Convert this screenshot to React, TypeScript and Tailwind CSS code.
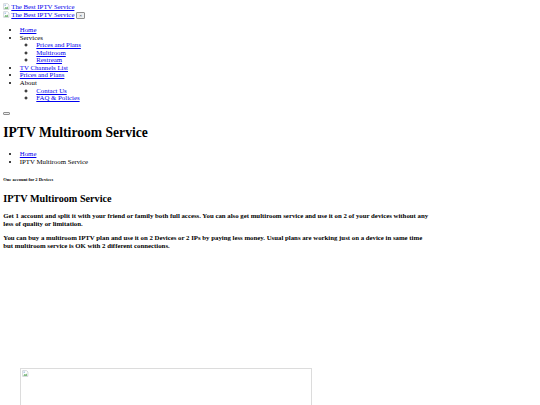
import React from "react";

function BrokenImg() {
  return (
    <svg width="7" height="7" viewBox="0 0 16 16" className="inline-block align-[-1px] mr-[1px]">
      <path d="M1.5 1.5h9l3 3v10h-12z" fill="#fff" stroke="#9aa3ad" strokeWidth="1" />
      <path d="M3 13l3-4 2 2 2-3 2 5z" fill="#5fa95f" />
      <circle cx="5" cy="5" r="1.3" fill="#6fa0d8" />
    </svg>
  );
}

function A({ children }: { children: React.ReactNode }) {
  return <a href="#" className="text-[#0000ee] underline">{children}</a>;
}

export default function App() {
  return (
    <div className="min-h-[405px] bg-white text-black font-['Liberation_Serif',serif] text-[6.8px] leading-[7.56px] p-[3.3px] overflow-hidden">
      <div>
        <a href="#" className="text-[#0000ee] underline"><BrokenImg />The Best IPTV Service</a>
      </div>
      <div className="flex items-center h-[8.6px]">
        <a href="#" className="text-[#0000ee] underline"><BrokenImg />The Best IPTV Service</a>
        <button className="ml-[1.7px] w-[9px] h-[7px] border border-[#8f8f8f] bg-[#efefef] rounded-[1px] text-[5px] leading-[5px] flex items-center justify-center">×</button>
      </div>
      <ul className="list-disc pl-[16.5px] my-[6.6px]">
        <li><A>Home</A></li>
        <li>Services
          <ul className="list-[circle] pl-[16.5px]">
            <li><A>Prices and Plans</A></li>
            <li><A>Multiroom</A></li>
            <li><A>Restream</A></li>
          </ul>
        </li>
        <li><A>TV Channels List</A></li>
        <li><A>Prices and Plans</A></li>
        <li>About
          <ul className="list-[circle] pl-[16.5px]">
            <li><A>Contact Us</A></li>
            <li><A>FAQ &amp; Policies</A></li>
          </ul>
        </li>
      </ul>
      <div className="h-[7.56px] flex items-end pb-[1px]">
        <button className="w-[6.6px] h-[2.6px] border border-[#8f8f8f] bg-[#efefef] rounded-[1px]"></button>
      </div>
      <h1 className="text-[13.6px] leading-[15.2px] font-bold mt-[8.8px] mb-[10.3px]">IPTV Multiroom Service</h1>
      <ul className="list-disc pl-[16.5px] my-[6.6px]">
        <li><A>Home</A></li>
        <li>IPTV Multiroom Service</li>
      </ul>
      <h6 className="text-[4.5px] leading-[5.1px] font-bold mt-[12px] mb-[10.3px]">One account for 2 Devices</h6>
      <h2 className="text-[10.2px] leading-[11.4px] font-bold mt-[8.2px] mb-[8.2px]">IPTV Multiroom Service</h2>
      <div className="max-w-[426px] font-bold">
        <p className="my-[7px]">Get 1 account and split it with your friend or family both full access. You can also get multiroom service and use it on 2 of your devices without any less of quality or limitation.</p>
        <p className="my-[7px]">You can buy a multiroom IPTV plan and use it on 2 Devices or 2 IPs by paying less money. Usual plans are working just on a device in same time but multiroom service is OK with 2 different connections.</p>
      </div>
      <div className="h-[105px]"></div>
      <figure className="mx-[16.5px] my-[6.6px]">
        <div className="w-[292px] h-[60px] border border-[#dcdcdc] p-[1px]">
          <BrokenImg />
        </div>
      </figure>
    </div>
  );
}
